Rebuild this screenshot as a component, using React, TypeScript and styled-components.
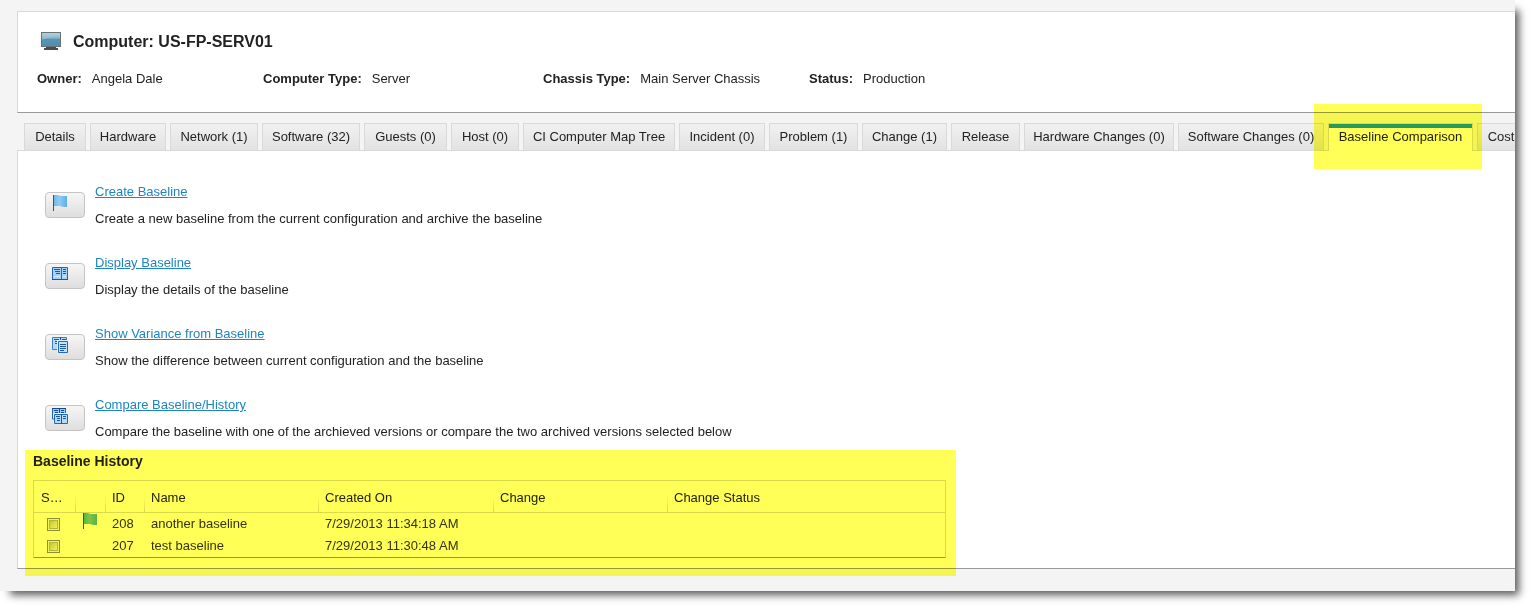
import React from "react";
import styled, { createGlobalStyle, css } from "styled-components";

const GlobalStyle = createGlobalStyle`
  *, *::before, *::after { box-sizing: border-box; }
  body {
    margin: 0;
    background: #fff;
    color: #222;
    font: 13px/22px "Liberation Sans", Arial, sans-serif;
  }
`;

const Page = styled.div`
  padding: 0 15px 15px 0;
`;

const Frame = styled.div`
  background: #f4f4f4;
  padding: 11px 0 22px 17px;
  box-shadow: 7px 7px 8px -3px rgba(0, 0, 0, 0.65);
`;

const highlight = css`
  content: "";
  position: absolute;
  background: #ffff57;
  mix-blend-mode: multiply;
  pointer-events: none;
  z-index: 2;
`;

const Header = styled.header`
  background: #fff;
  border: 1px solid #d9d9d9;
  border-right: 0;
  border-bottom-color: #999;
  padding: 19px 19px 22px;
`;

const TitleRow = styled.div`
  display: flex;
  align-items: center;
  gap: 12px;
  padding-left: 4px;
  margin-bottom: 15px;
`;

const Title = styled.h1`
  margin: 0;
  font-size: 16px;
  line-height: 22px;
`;

const Fields = styled.dl`
  display: grid;
  grid-template-columns: 226px 280px 266px auto;
  margin: 0;
`;

const Field = styled.div`
  display: flex;
  gap: 10px;
`;

const Label = styled.dt`
  font-weight: bold;
`;

const Value = styled.dd`
  margin: 0;
`;

const TabBar = styled.nav`
  display: flex;
  gap: 4px;
  padding: 10px 0 0 7px;
  overflow-x: clip;
  overflow-y: visible;
`;

const TabSlot = styled.div<{ $marked: boolean }>`
  position: relative;
  flex: none;
  height: 27px;
  ${(p) => p.$marked && css`
    &::after { ${highlight} inset: -19px -9px -19px -14px; }
  `}
`;

const Tab = styled.button<{ $active: boolean; $width: number }>`
  display: flex;
  justify-content: center;
  width: ${(p) => p.$width}px;
  height: 27px;
  padding: 0;
  border: 1px solid #d9d9d9;
  border-bottom: 0;
  background: linear-gradient(#f1f1f1, #e2e2e2);
  color: #222;
  font: inherit;
  line-height: 26px;
  white-space: nowrap;
  ${(p) => p.$active && css`
    height: 28px;
    padding-bottom: 1px;
    background: #fff;
    box-shadow: inset 0 4px #269aff;
  `}
`;

const Panel = styled.main`
  background: #fff;
  border: 1px solid #d9d9d9;
  border-right: 0;
  border-bottom-color: #999;
  padding: 27px 0 0 7px;
`;

const Action = styled.section`
  display: flex;
  gap: 10px;
  padding-left: 20px;
  margin-bottom: 17px;
`;

const IconButton = styled.button`
  display: flex;
  align-items: flex-start;
  width: 40px;
  height: 26px;
  margin-top: 14px;
  padding: 2px 6px;
  border: 1px solid #c4c4c4;
  border-radius: 4px;
  background: linear-gradient(#f6f6f6, #dedede);
`;

const ActionText = styled.div`
  line-height: 27px;
`;

const ActionLink = styled.a`
  color: #1f85bf;
`;

const Description = styled.p`
  margin: 0;
`;

const History = styled.section`
  position: relative;
  width: 931px;
  max-width: 100%;
  margin-top: -12px;
  padding: 0 10px 10px 8px;
  &::after { ${highlight} inset: 0 0 -8px; }
`;

const HistoryTitle = styled.h2`
  margin: 0 0 8px;
  font-size: 14px;
  line-height: 22px;
`;

const Table = styled.table`
  width: 100%;
  table-layout: fixed;
  border: 1px solid #d9d9d9;
  border-bottom-color: #999;
  border-spacing: 0;
  text-align: left;
`;

const HeadCell = styled.th`
  height: 32px;
  padding: 2px 6px 0;
  border-bottom: 1px solid #d9d9d9;
  background: linear-gradient(#fff, #d9d9d9) right bottom / 1px 16px no-repeat;
  font-weight: normal;
  white-space: nowrap;
  &:first-child { padding-left: 7px; }
  &:last-child { background: none; }
`;

const Cell = styled.td`
  height: 22px;
  padding: 0 6px;
  color: #333;
  white-space: nowrap;
  vertical-align: top;
`;

const Check = styled.input`
  display: block;
  appearance: none;
  width: 13px;
  height: 13px;
  margin: 5px 0 0 7px;
  border: 1px solid #8e8f8f;
  background: linear-gradient(135deg, #b8b8b8, #fff);
  box-shadow: inset 0 0 0 1px #f4f4f4, inset 0 0 0 2px #b5b5b5;
`;

const Icon = styled.svg`
  display: block;
  flex: none;
`;

function Monitor() {
  return (
    <Icon width="20" height="20" viewBox="0 0 20 20" aria-hidden="true">
      <defs>
        <linearGradient id="screen" x2="0" y2="1">
          <stop offset="0" stopColor="#a9cbdb" />
          <stop offset="0.4" stopColor="#86b2ca" />
          <stop offset="0.5" stopColor="#5893b5" />
          <stop offset="1" stopColor="#4f8fb2" />
        </linearGradient>
      </defs>
      <rect width="20" height="15" fill="#6b7276" />
      <rect x="1" y="1" width="18" height="13" fill="url(#screen)" />
      <path d="M1 1h18v3Q10 4 1 8z" fill="#d6e5ec" opacity=".2" />
      <path d="M5 15h10v1h2v2H3v-2h2z" fill="#4a4d50" />
    </Icon>
  );
}

function Flag({ green = false }: { green?: boolean }) {
  const id = green ? "greenFlag" : "blueFlag";
  return (
    <Icon width="16" height="16" viewBox="0 0 16 16" aria-hidden="true">
      <defs>
        <linearGradient id={id}>
          <stop offset="0" stopColor={green ? "#55b5c0" : "#6fb9ea"} />
          <stop offset="0.4" stopColor={green ? "#80c4d0" : "#8fcbf2"} />
          <stop offset="1" stopColor={green ? "#58b4c0" : "#5cb0e8"} />
        </linearGradient>
      </defs>
      <path d="M2 0h4q2 1 4 1h5v11h-3q-2 0-4-1H2z" fill={`url(#${id})`} />
      <path d="M1 0h1v16H1z" fill={green ? "#1d6b4c" : "#1c5a9e"} />
    </Icon>
  );
}

function Book() {
  return (
    <Icon width="16" height="16" viewBox="0 0 16 16" aria-hidden="true">
      <path d="M.5 1.5h15v12H.5z" fill="#a5d2f7" stroke="#2467b3" />
      <path d="M9.5 1v13" stroke="#2467b3" />
      <path d="M2 3.5h6M3 5.5h5M4 7.5h4M11 3.5h3M11 5.5h3M11 7.5h3" stroke="#17589f" />
      <path d="M2 10.5h6M11 10.5h3" stroke="#d3eafc" />
      <path d="M0 13.5h16" stroke="#17589f" />
    </Icon>
  );
}

function Variance() {
  return (
    <Icon width="16" height="16" viewBox="0 0 16 16" aria-hidden="true">
      <path d="M.5.5h14v12H.5z" fill="#b5daf8" stroke="#3a80c5" />
      <path d="M8.5 0v4M2 2.5h5M3 4.5h3M10 2.5h4M3 6.5h2" stroke="#17589f" />
      <path d="M5 3h11v13H5z" fill="#eee" />
      <path d="M6.5 4.5h9v11h-9z" fill="#c5e2fa" stroke="#2467b3" />
      <path d="M8 7.5h6M8 9.5h6M8 11.5h6M8 13.5h4" stroke="#17589f" />
    </Icon>
  );
}

function Compare() {
  return (
    <Icon width="16" height="16" viewBox="0 0 16 16" aria-hidden="true">
      <path d="M.5.5h13v10H.5z" fill="#9dccf3" stroke="#2467b3" />
      <path d="M0 .5h14M7.5 0v5M2 2.5h4M3 4.5h3M9 2.5h3M9 4.5h3" stroke="#124a8b" />
      <path d="M1 5h15v11H1z" fill="#eee" />
      <path d="M.5 5v6H2" fill="none" stroke="#2467b3" />
      <path d="M2.5 6.5h13v9h-13z" fill="#b5daf8" stroke="#2467b3" />
      <path d="M9.5 6v10M4 8.5h4M5 10.5h3M5 12.5h3M11 8.5h3M11 10.5h3" stroke="#17589f" />
    </Icon>
  );
}

const fields = [
  ["Owner:", "Angela Dale"],
  ["Computer Type:", "Server"],
  ["Chassis Type:", "Main Server Chassis"],
  ["Status:", "Production"],
];

const activeTab = "Baseline Comparison";
const tabs = [
  { name: "Details", width: 62 },
  { name: "Hardware", width: 76 },
  { name: "Network (1)", width: 88 },
  { name: "Software (32)", width: 98 },
  { name: "Guests (0)", width: 83 },
  { name: "Host (0)", width: 68 },
  { name: "CI Computer Map Tree", width: 152 },
  { name: "Incident (0)", width: 86 },
  { name: "Problem (1)", width: 89 },
  { name: "Change (1)", width: 85 },
  { name: "Release", width: 69 },
  { name: "Hardware Changes (0)", width: 150 },
  { name: "Software Changes (0)", width: 146 },
  { name: activeTab, width: 145 },
  { name: "Cost", width: 48 },
];

const actions = [
  { title: "Create Baseline", text: "Create a new baseline from the current configuration and archive the baseline", icon: <Flag /> },
  { title: "Display Baseline", text: "Display the details of the baseline", icon: <Book /> },
  { title: "Show Variance from Baseline", text: "Show the difference between current configuration and the baseline", icon: <Variance /> },
  { title: "Compare Baseline/History", text: "Compare the baseline with one of the archieved versions or compare the two archived versions selected below", icon: <Compare /> },
];

const columns = [
  { name: "S…", width: 42 },
  { name: "", width: 30 },
  { name: "ID", width: 39 },
  { name: "Name", width: 174 },
  { name: "Created On", width: 175 },
  { name: "Change", width: 174 },
  { name: "Change Status" },
];

const baselines = [
  { id: 208, name: "another baseline", created: "7/29/2013 11:34:18 AM", current: true },
  { id: 207, name: "test baseline", created: "7/29/2013 11:30:48 AM", current: false },
];

export default function App() {
  return (
    <Page>
      <GlobalStyle />
      <Frame>
        <Header>
          <TitleRow>
            <Monitor />
            <Title>Computer: US-FP-SERV01</Title>
          </TitleRow>
          <Fields>
            {fields.map(([label, value]) => (
              <Field key={label}>
                <Label>{label}</Label>
                <Value>{value}</Value>
              </Field>
            ))}
          </Fields>
        </Header>
        <TabBar>
          {tabs.map((tab) => (
            <TabSlot key={tab.name} $marked={tab.name === activeTab}>
              <Tab type="button" $active={tab.name === activeTab} $width={tab.width}>{tab.name}</Tab>
            </TabSlot>
          ))}
        </TabBar>
        <Panel>
          {actions.map((action) => (
            <Action key={action.title}>
              <IconButton type="button" aria-label={action.title}>{action.icon}</IconButton>
              <ActionText>
                <ActionLink href="#">{action.title}</ActionLink>
                <Description>{action.text}</Description>
              </ActionText>
            </Action>
          ))}
          <History>
            <HistoryTitle>Baseline History</HistoryTitle>
            <Table>
              <colgroup>
                {columns.map((c) => <col key={c.name} width={c.width} />)}
              </colgroup>
              <thead>
                <tr>{columns.map((c) => <HeadCell key={c.name}>{c.name}</HeadCell>)}</tr>
              </thead>
              <tbody>
                {baselines.map((b) => (
                  <tr key={b.id}>
                    <Cell><Check type="checkbox" aria-label={`Select ${b.name}`} /></Cell>
                    <Cell>{b.current && <Flag green />}</Cell>
                    <Cell>{b.id}</Cell>
                    <Cell>{b.name}</Cell>
                    <Cell>{b.created}</Cell>
                    <Cell />
                    <Cell />
                  </tr>
                ))}
              </tbody>
            </Table>
          </History>
        </Panel>
      </Frame>
    </Page>
  );
}
